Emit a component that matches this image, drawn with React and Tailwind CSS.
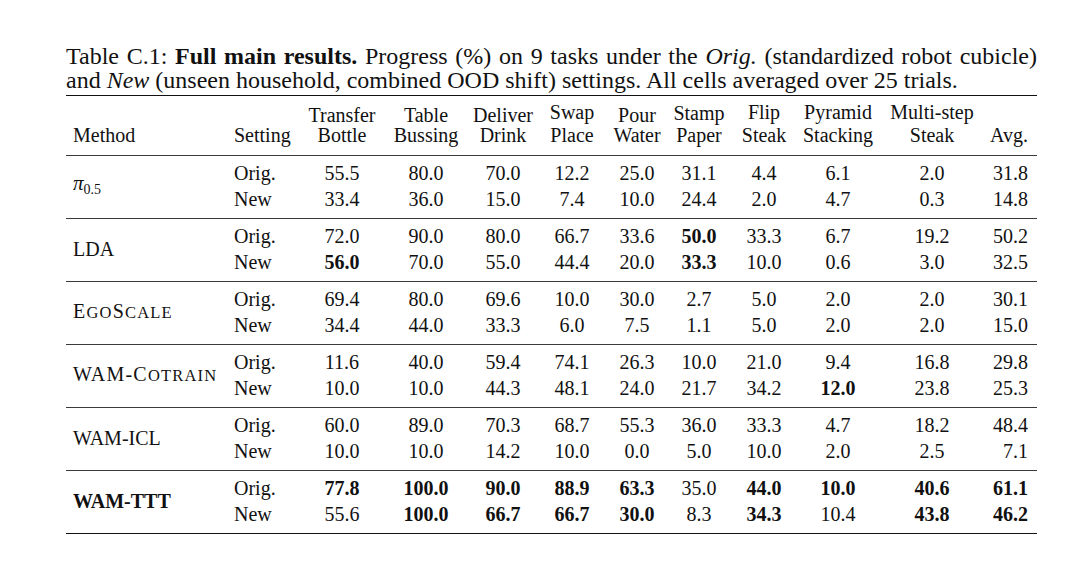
import React from "react";

const COLS =
  "grid grid-cols-[160px_74px_84px_84px_70px_68px_62px_62px_68px_80px_108px_51px]";

function SC({ big, small }) {
  return (
    <>
      {big}
      <span className="text-[16.5px] uppercase">{small}</span>
    </>
  );
}

const groups = [
  {
    name: (
      <span>
        <span className="italic text-[21px]">π</span>
        <span className="text-[14px] align-[-4px]">0.5</span>
      </span>
    ),
    rows: [
      ["55.5", "80.0", "70.0", "12.2", "25.0", "31.1", "4.4", "6.1", "2.0", "31.8"],
      ["33.4", "36.0", "15.0", "7.4", "10.0", "24.4", "2.0", "4.7", "0.3", "14.8"],
    ],
    bold: [[], []],
  },
  {
    name: <span>LDA</span>,
    rows: [
      ["72.0", "90.0", "80.0", "66.7", "33.6", "50.0", "33.3", "6.7", "19.2", "50.2"],
      ["56.0", "70.0", "55.0", "44.4", "20.0", "33.3", "10.0", "0.6", "3.0", "32.5"],
    ],
    bold: [[5], [0, 5]],
  },
  {
    name: (
      <span className="tracking-[1.2px]">
        <SC big="E" small="go" />
        <SC big="S" small="cale" />
      </span>
    ),
    rows: [
      ["69.4", "80.0", "69.6", "10.0", "30.0", "2.7", "5.0", "2.0", "2.0", "30.1"],
      ["34.4", "44.0", "33.3", "6.0", "7.5", "1.1", "5.0", "2.0", "2.0", "15.0"],
    ],
    bold: [[], []],
  },
  {
    name: (
      <span className="tracking-[1.2px]">
        <SC big="WAM-C" small="otrain" />
      </span>
    ),
    rows: [
      ["11.6", "40.0", "59.4", "74.1", "26.3", "10.0", "21.0", "9.4", "16.8", "29.8"],
      ["10.0", "10.0", "44.3", "48.1", "24.0", "21.7", "34.2", "12.0", "23.8", "25.3"],
    ],
    bold: [[], [7]],
  },
  {
    name: <span>WAM-ICL</span>,
    rows: [
      ["60.0", "89.0", "70.3", "68.7", "55.3", "36.0", "33.3", "4.7", "18.2", "48.4"],
      ["10.0", "10.0", "14.2", "10.0", "0.0", "5.0", "10.0", "2.0", "2.5", "7.1"],
    ],
    bold: [[], []],
  },
  {
    name: <span className="font-bold">WAM-TTT</span>,
    rows: [
      ["77.8", "100.0", "90.0", "88.9", "63.3", "35.0", "44.0", "10.0", "40.6", "61.1"],
      ["55.6", "100.0", "66.7", "66.7", "30.0", "8.3", "34.3", "10.4", "43.8", "46.2"],
    ],
    bold: [
      [0, 1, 2, 3, 4, 6, 7, 8, 9],
      [1, 2, 3, 4, 6, 8, 9],
    ],
  },
];

const headers = [
  ["Transfer", "Bottle", ""],
  ["Table", "Bussing", ""],
  ["Deliver", "Drink", ""],
  ["Swap", "Place", "-translate-y-[3px]"],
  ["Pour", "Water", ""],
  ["Stamp", "Paper", "-translate-y-[2px]"],
  ["Flip", "Steak", "-translate-y-[3px]"],
  ["Pyramid", "Stacking", "-translate-y-[3px]"],
  ["Multi-step", "Steak", "-translate-y-[3px]"],
];

function Group({ g, last }) {
  return (
    <div
      className={
        COLS +
        " border-t border-[#3a3a3a] pt-[4px] pb-[6px] leading-[26px]" +
        (last ? " border-b-[1.5px] border-b-[#111]" : "")
      }
    >
      <div className="row-span-2 self-center pl-[7px] whitespace-nowrap">{g.name}</div>
      {g.rows.map((r, ri) => (
        <React.Fragment key={ri}>
          <div className="pl-[8px]">{ri === 0 ? "Orig." : "New"}</div>
          {r.map((v, ci) => (
            <div
              key={ci}
              className={
                (ci === 9 ? "text-right pr-[9px]" : "text-center") +
                (g.bold[ri].includes(ci) ? " font-bold" : "")
              }
            >
              {v}
            </div>
          ))}
        </React.Fragment>
      ))}
    </div>
  );
}

export default function App() {
  return (
    <div className="min-h-[571px] w-[1080px] bg-white text-[#111] font-['Liberation_Serif','Times_New_Roman',serif]">
      <div className="pt-[44px] pl-[66px] w-[1037px]">
        <div className="w-[971px] text-[24px] leading-[24px]">
          <div className="whitespace-nowrap text-justify [text-align-last:justify]">
            Table C.1: <span className="font-bold">Full main results.</span> Progress (%) on 9
            tasks under the <span className="italic">Orig.</span> (standardized robot cubicle)
          </div>
          <div className="whitespace-nowrap">
            and <span className="italic">New</span> (unseen household, combined OOD shift)
            settings. All cells averaged over 25 trials.
          </div>
        </div>
        <div className="mt-[3px] w-[971px] text-[20px]">
          <div className={COLS + " border-t-[1.5px] border-[#111] pt-[9px] pb-[10px] leading-[20px]"}>
            <div className="self-end pl-[7px]">Method</div>
            <div className="self-end pl-[8px]">Setting</div>
            {headers.map(([a, b, off], i) => (
              <div key={i} className="flex flex-col items-center whitespace-nowrap">
                <span className={off}>{a}</span>
                <span>{b}</span>
              </div>
            ))}
            <div className="self-end text-right pr-[9px]">Avg.</div>
          </div>
          {groups.map((g, i) => (
            <Group key={i} g={g} last={i === groups.length - 1} />
          ))}
        </div>
      </div>
    </div>
  );
}
